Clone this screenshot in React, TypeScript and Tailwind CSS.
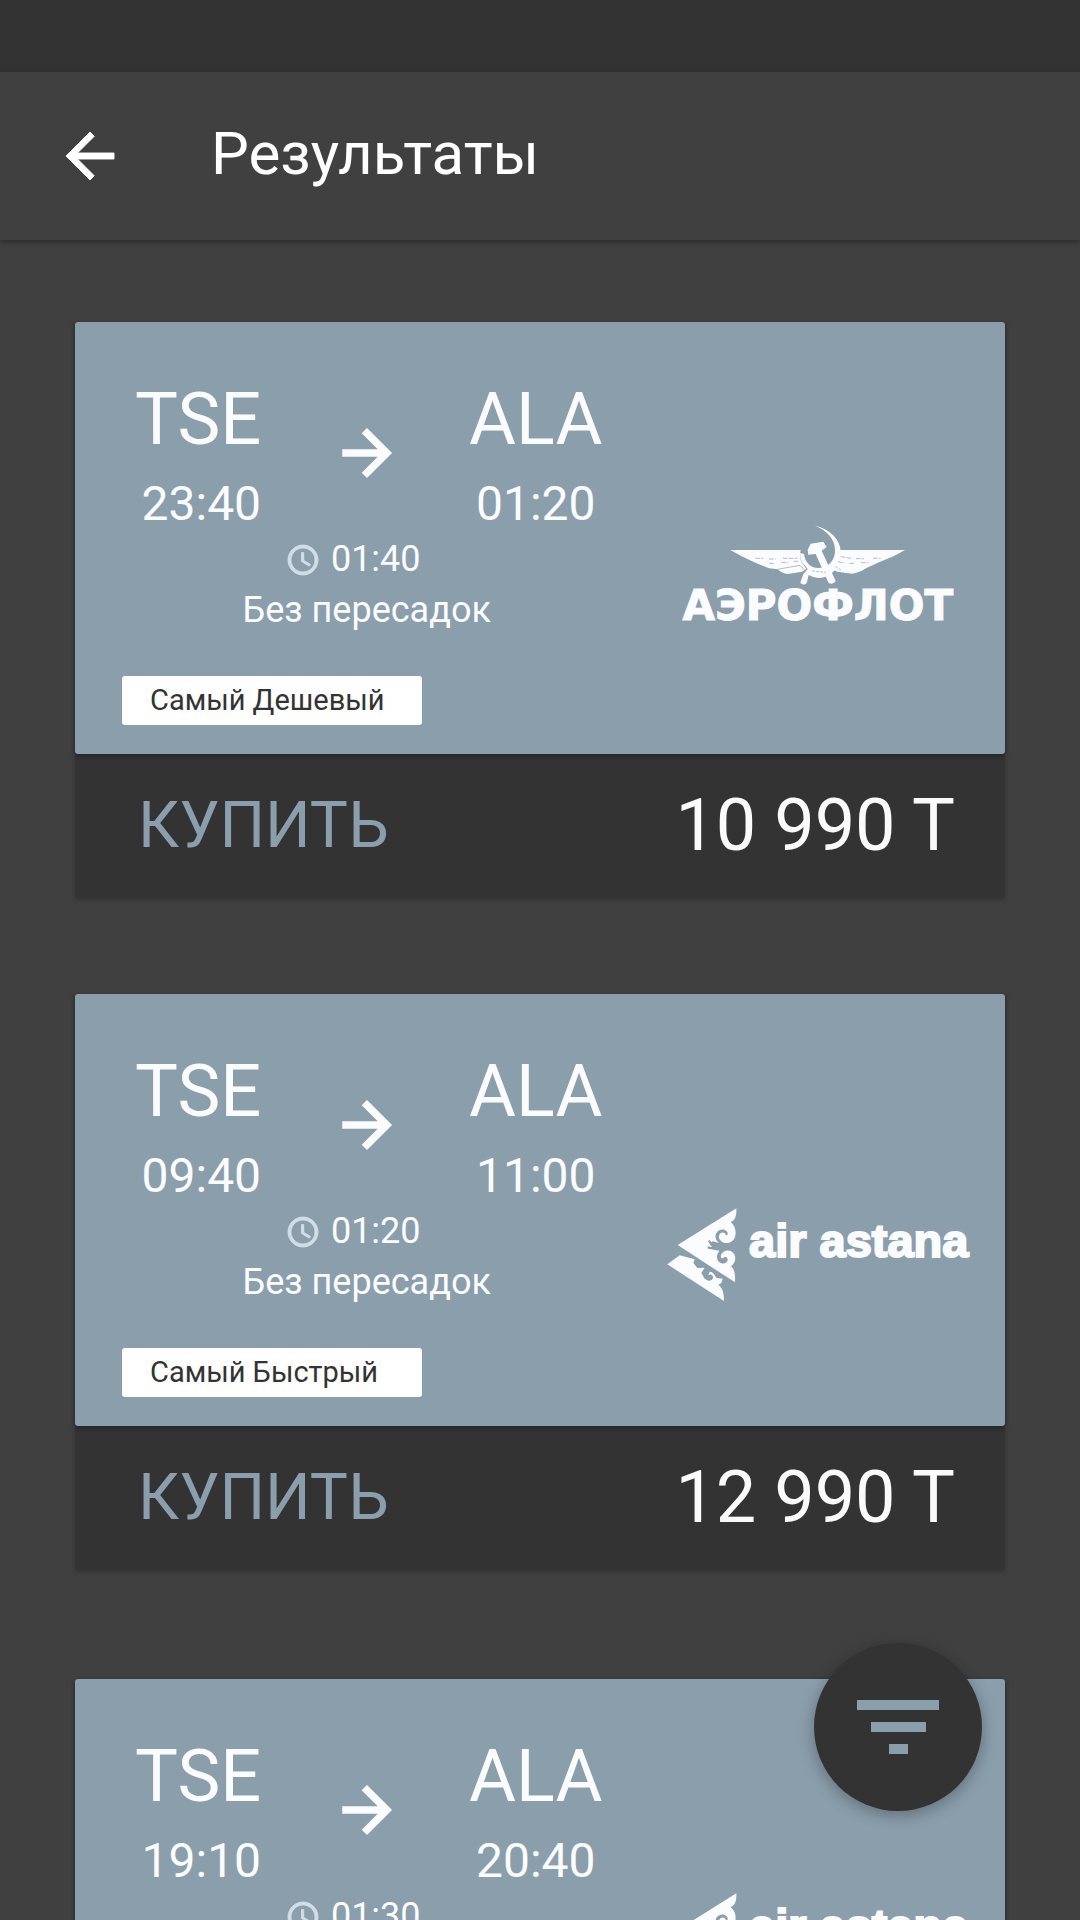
import React from "react";

type Airline = "aeroflot" | "astana";

interface Flight {
  from: string;
  to: string;
  departure: string;
  arrival: string;
  duration: string;
  stops: string;
  airline: Airline;
  tag?: string;
  price?: string;
}

const flights: Flight[] = [
  {
    from: "TSE",
    to: "ALA",
    departure: "23:40",
    arrival: "01:20",
    duration: "01:40",
    stops: "Без пересадок",
    airline: "aeroflot",
    tag: "Самый Дешевый",
    price: "10 990 T",
  },
  {
    from: "TSE",
    to: "ALA",
    departure: "09:40",
    arrival: "11:00",
    duration: "01:20",
    stops: "Без пересадок",
    airline: "astana",
    tag: "Самый Быстрый",
    price: "12 990 T",
  },
  {
    from: "TSE",
    to: "ALA",
    departure: "19:10",
    arrival: "20:40",
    duration: "01:30",
    stops: "Без пересадок",
    airline: "astana",
  },
];

function ArrowLeft() {
  return (
    <svg viewBox="0 0 24 24" className="size-[72px]" fill="currentColor" stroke="currentColor" strokeWidth="0.3" aria-hidden="true">
      <path d="M20 11H7.83l5.59-5.59L12 4l-8 8 8 8 1.41-1.41L7.83 13H20v-2z" />
    </svg>
  );
}

function ArrowRight() {
  return (
    <svg viewBox="0 0 24 24" className="size-[72px]" fill="currentColor" stroke="currentColor" strokeWidth="0.5" aria-hidden="true">
      <path d="M12 4l-1.41 1.41L16.17 11H4v2h12.17l-5.58 5.59L12 20l8-8z" />
    </svg>
  );
}

function Clock() {
  return (
    <svg viewBox="0 0 24 24" className="size-[36px] text-[#d3dde6]" fill="currentColor" stroke="currentColor" strokeWidth="0.6" aria-hidden="true">
      <path d="M11.99 2C6.47 2 2 6.48 2 12s4.47 10 9.99 10C17.52 22 22 17.52 22 12S17.52 2 11.99 2zM12 20c-4.42 0-8-3.58-8-8s3.58-8 8-8 8 3.58 8 8-3.58 8-8 8z" />
      <path d="M12.5 7H11v6l5.25 3.15.75-1.23-4.5-2.67z" />
    </svg>
  );
}

function AeroflotLogo() {
  return (
    <div className="flex flex-col items-center">
      <svg viewBox="205 45 534 189" className="h-[63px] w-[178px]" aria-hidden="true">
        <g fill="#fafcff">
          {/* wings */}
          <path d="M209 123H420C417 137 418 150 424 161L437 180L424 188L382 195Q362 193 351 181L325 178L284 161L243 142Z" />
          <path d="M733 123H538C538 140 533 156 523 168L512 180L530 188L574 194Q598 190 613 179L655 160L700 141Z" />
          {/* sickle and its handle */}
          <path d="M462 49C510 62 538 92 540 126C541 164 521 201 483 206Q462 209 444 198L438 222Q429 232 419 221L428 195L441 180L424 160Q418 148 418 132L430 135C433 160 450 178 475 177C505 176 524 152 523 122C522 88 498 66 462 49Z" />
          {/* hammer */}
          <path d="M441 122L450 104L488 98L498 114L483 125L525 216Q518 228 504 222L465 135L443 137Z" />
        </g>
        <g fill="none" stroke="#8b9eac" strokeWidth="2">
          <path d="M284 148H308M325 150H345M367 148H410M325 163H343M362 160H383M399 157H416" strokeDasharray="14 4" />
          <path d="M350 181L418 169L433 185" />
          <path d="M540 143L572 148M586 149H610M637 148H660M532 158L552 162M566 163H582M601 161H622" strokeDasharray="14 4" />
          <path d="M524 172L542 184M455 186L496 190" strokeDasharray="8 4" />
        </g>
      </svg>
      <span className="font-['DejaVu_Sans'] text-[42px] leading-[38px] font-bold whitespace-nowrap text-[#fafcff] [-webkit-text-stroke:1px_#fafcff]">
        АЭРОФЛОТ
      </span>
    </div>
  );
}

function AstanaLogo() {
  return (
    <div className="flex gap-3 pt-3">
      <svg viewBox="48 55 210 282" className="h-[94px] w-[70px]" aria-hidden="true">
        <g fill="#fafcff">
          <path d="M80 166L256 56C257 77 253 93 239 97C252 108 257 124 252 142C246 158 231 163 218 159C204 154 200 141 207 132C214 125 223 128 225 137C229 139 233 132 227 125C218 116 203 118 196 130C190 141 195 153 204 160L184 155L176 163L190 176L205 183L199 194C196 208 200 217 211 221C224 224 233 214 229 206C226 200 220 201 217 205C212 208 208 204 210 196C214 182 236 177 247 190C257 202 254 219 240 230C251 240 253 254 252 278Z" />
          <path d="M49 224L86 197L131 209L127 220L139 235L161 234L151 250L160 266C170 277 184 274 186 265C187 257 180 251 172 257L176 246C188 245 190 258 198 265L215 267L211 280L202 286C214 294 219 309 219 334Z" />
        </g>
        <g fill="none" stroke="#8b9eac" strokeLinecap="round" strokeWidth="7">
          <path d="M175 155L189 174M173 174L200 179" />
        </g>
      </svg>
      <span className="mt-[6px] font-['Liberation_Sans'] text-[47px] leading-[54px] font-bold whitespace-nowrap text-[#fafcff] [-webkit-text-stroke:2px_#fafcff]">
        air astana
      </span>
    </div>
  );
}

function FlightCard({ flight }: { flight: Flight }) {
  return (
    <article className="rounded-[3px] bg-[#333333] shadow-[0_2px_4px_rgba(0,0,0,0.2)]">
      <div className="rounded-[3px] bg-[#8b9eac] pt-[58px] pb-[29px] text-[#fafcff] shadow-[0_2px_5px_rgba(0,0,0,0.3)]">
        <div className="flex pl-[60px]">
          <div className="shrink-0">
            <div className="flex items-start gap-[68px]">
              <div className="flex flex-col gap-4 text-right">
                <span className="text-[72px] leading-[80px]">{flight.from}</span>
                <time className="text-[48px] leading-[56px]">{flight.departure}</time>
              </div>
              <div className="-mr-[2px] ml-[2px] pt-[37px]">
                <ArrowRight />
              </div>
              <div className="flex flex-col gap-4 text-center">
                <span className="text-[72px] leading-[80px]">{flight.to}</span>
                <time className="text-[48px] leading-[56px]">{flight.arrival}</time>
              </div>
            </div>
            <div className="mt-[2px] flex items-center justify-center gap-[10px] pr-8 text-[36px] leading-[51px]">
              <Clock />
              <time>{flight.duration}</time>
            </div>
            <p className="pr-1 text-center text-[36px] leading-[51px]">{flight.stops}</p>
          </div>
          <div className="flex flex-1 items-start justify-center pt-[144px] pl-7">
            {flight.airline === "aeroflot" ? <AeroflotLogo /> : <AstanaLogo />}
          </div>
        </div>
        <div className="mt-10 ml-[47px] h-[49px]">
          {flight.tag && (
            <p className="w-[300px] rounded-[3px] bg-white pl-7 text-[29px] leading-[49px] text-[#333333]">
              {flight.tag}
            </p>
          )}
        </div>
      </div>
      <div className="flex h-[144px] items-center justify-between pr-[50px] pl-[63px]">
        <button type="button" className="text-[64px] leading-[80px] text-[#8b9eac]">
          КУПИТЬ
        </button>
        <span className="text-[72px] leading-[80px] text-[#fafafa]">{flight.price}</span>
      </div>
    </article>
  );
}

export default function App() {
  return (
    <div className="flex h-screen flex-col bg-[#404040] font-[Roboto,sans-serif]">
      <div className="h-[72px] shrink-0 bg-[#333333]" />
      <header className="z-10 flex h-[168px] shrink-0 items-center gap-[85px] bg-[#404040] pl-[54px] text-white shadow-[0_2px_5px_rgba(0,0,0,0.35)]">
        <button type="button" aria-label="Назад">
          <ArrowLeft />
        </button>
        <h1 className="pb-1 text-[60px] leading-[72px]">Результаты</h1>
      </header>
      <main className="min-h-0 flex-1 overflow-y-auto px-[75px] pt-[82px] [scrollbar-width:none]">
        <div className="flex flex-col gap-24">
          <FlightCard flight={flights[0]} />
          <FlightCard flight={flights[1]} />
        </div>
        <div className="mt-[109px] pb-24">
          <FlightCard flight={flights[2]} />
        </div>
      </main>
      <button
        type="button"
        aria-label="Фильтр"
        className="fixed right-[98px] bottom-[109px] z-20 flex size-[168px] flex-col items-center justify-center gap-3 rounded-full bg-[#333333] shadow-[0_4px_16px_rgba(0,0,0,0.3)]"
      >
        <span className="h-[10px] w-[82px] bg-[#8b9eac]" />
        <span className="h-[10px] w-[55px] bg-[#8b9eac]" />
        <span className="h-[10px] w-[19px] bg-[#8b9eac]" />
      </button>
    </div>
  );
}
